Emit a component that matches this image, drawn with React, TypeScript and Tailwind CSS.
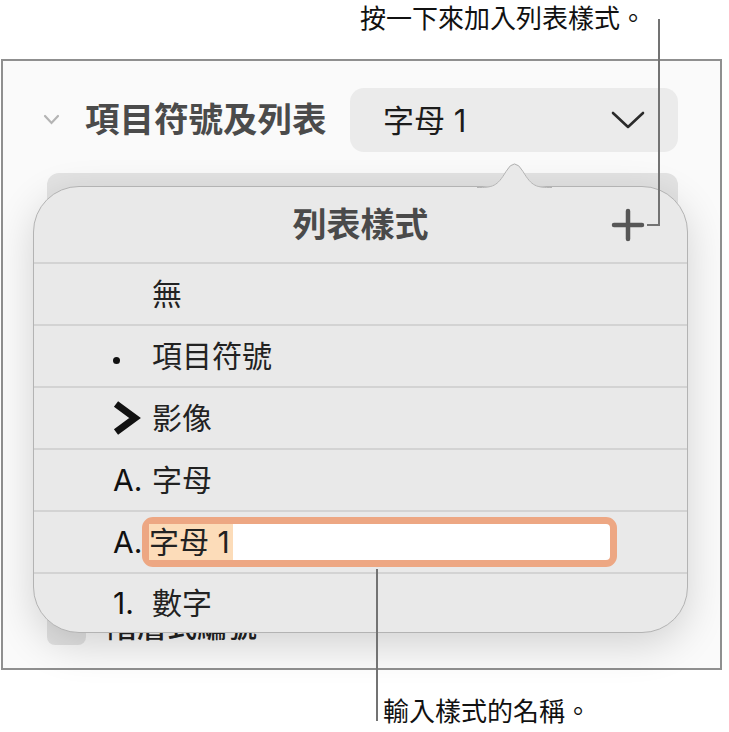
import type { ReactNode } from "react";

const ROWS: { mark: ReactNode; label: string }[] = [
  { mark: null, label: "無" },
  { mark: <span className="mt-[8px] block h-[7px] w-[7px] rounded-full bg-[#111]" />, label: "項目符號" },
  {
    mark: (
      <svg width="28" height="34" viewBox="0 0 28 34">
        <polyline points="3,3 22,17 3,31" fill="none" stroke="#111" strokeWidth="7" strokeLinejoin="miter" />
      </svg>
    ),
    label: "影像",
  },
  { mark: <span>A.</span>, label: "字母" },
];

function SmallChevron() {
  return (
    <svg width="17" height="12" viewBox="0 0 17 12">
      <polyline points="2,2 8.5,9 15,2" fill="none" stroke="#b4b4b4" strokeWidth="2.2" strokeLinecap="round" />
    </svg>
  );
}

function Row({ children }: { children: ReactNode }) {
  return <div className="flex h-[62px] items-center border-t-2 border-[#d3d3d3] pl-[79px]">{children}</div>;
}

function ListStylePopover() {
  return (
    <div className="absolute left-[33px] top-[186px] flex h-[447px] w-[655px] flex-col rounded-[46px] border border-[#b3b3b3] bg-[#e9e9e9] shadow-[0_12px_40px_rgba(0,0,0,0.16)]">
      {/* pointer up to the dropdown */}
      <svg className="absolute left-[443px] top-[-30px]" width="75" height="32" viewBox="0 0 75 32">
        <path d="M0,30 C16,30 20,29 29,14 Q37.5,-1 46,14 C55,29 59,30 75,30 L75,32 L0,32 Z" fill="#e9e9e9" />
        <path d="M0,30.5 C16,30.5 20,29.5 29,14.5 Q37.5,-0.5 46,14.5 C55,29.5 59,30.5 75,30.5" fill="none" stroke="#b3b3b3" strokeWidth="1" />
      </svg>

      <div className="grid h-[75px] grid-cols-[1fr_auto_1fr] items-center">
        <span />
        <h3 className="text-[34px] font-bold leading-none text-[#4a4a4a]">列表樣式</h3>
        <div className="flex justify-end pr-[42px]">
          <svg width="34" height="34" viewBox="0 0 34 34">
            <path d="M17 3 V31 M3 17 H31" stroke="#575757" strokeWidth="4.5" strokeLinecap="round" />
          </svg>
        </div>
      </div>

      {ROWS.map((r) => (
        <Row key={r.label}>
          <span className="flex w-[39px] items-center text-[30px] leading-none">{r.mark}</span>
          <span className="text-[30px] leading-none text-[#222]">{r.label}</span>
        </Row>
      ))}

      <Row>
        <span className="w-[29px] text-[30px] leading-none">A.</span>
        <div className="flex h-[50px] w-[475px] rounded-[11px] border-[7px] border-[#eda783] bg-white">
          <span className="flex h-full items-center bg-[#fcdcb9] pr-[3px] text-[30px] leading-none text-[#222]">
            字母 1
          </span>
        </div>
      </Row>

      <div className="flex flex-1 items-center border-t-2 border-[#d3d3d3] pl-[79px]">
        <span className="w-[39px] text-[30px] leading-none">1.</span>
        <span className="text-[30px] leading-none text-[#222]">數字</span>
      </div>
    </div>
  );
}

export default function App() {
  return (
    <div className="relative h-[732px] w-[729px] overflow-hidden bg-white font-['Inter','Noto_Sans_CJK_TC',sans-serif] text-[#111]">
      <p className="h-[59px] pl-[360px] pt-[3px] text-[26px] leading-[32px]">按一下來加入列表樣式。</p>

      <section className="ml-[1px] flex h-[611px] w-[721px] flex-col border-2 border-[#8f8f8f] bg-[#fafafa]">
        <div className="mt-[27px] flex h-[64px] items-center pl-[40px] pr-[42px]">
          <SmallChevron />
          <h2 className="ml-[25px] text-[34.5px] font-bold leading-none text-[#4b4b4b]">項目符號及列表</h2>
          <button className="ml-auto flex h-[64px] w-[328px] items-center justify-between rounded-[14px] bg-[#ebebeb] pl-[33px] pr-[33px]">
            <span className="text-[31px] leading-none text-[#1c1c1c]">字母 1</span>
            <svg width="34" height="20" viewBox="0 0 34 20">
              <polyline points="2,3 17,17 32,3" fill="none" stroke="#2b2b2b" strokeWidth="2.6" strokeLinecap="round" strokeLinejoin="round" />
            </svg>
          </button>
        </div>

        <div className="ml-[44px] mr-[42px] mt-[21px] h-[48px] rounded-[12px] bg-[#e3e3e3]" />

        <div className="flex-1" />

        {/* numbering row, mostly hidden under the popover */}
        <div className="mb-[23px] ml-[44px] flex h-[38px] items-center">
          <span className="h-[38px] w-[39px] rounded-[8px] bg-[#e2e2e2]" />
          <span className="ml-[21px] text-[30px] font-medium leading-none text-[#222]">階層式編號</span>
        </div>
      </section>

      <p className="mt-[26px] pl-[383px] text-[26px] leading-[32px]">輸入樣式的名稱。</p>

      <ListStylePopover />

      {/* callout leader lines */}
      <div className="absolute left-[658px] top-[19px] h-[207px] w-[2px] bg-[#737373]" />
      <div className="absolute left-[647px] top-[224px] h-[2px] w-[13px] bg-[#737373]" />
      <div className="absolute left-[376px] top-[569px] h-[152px] w-[2px] bg-[#737373]" />
    </div>
  );
}
